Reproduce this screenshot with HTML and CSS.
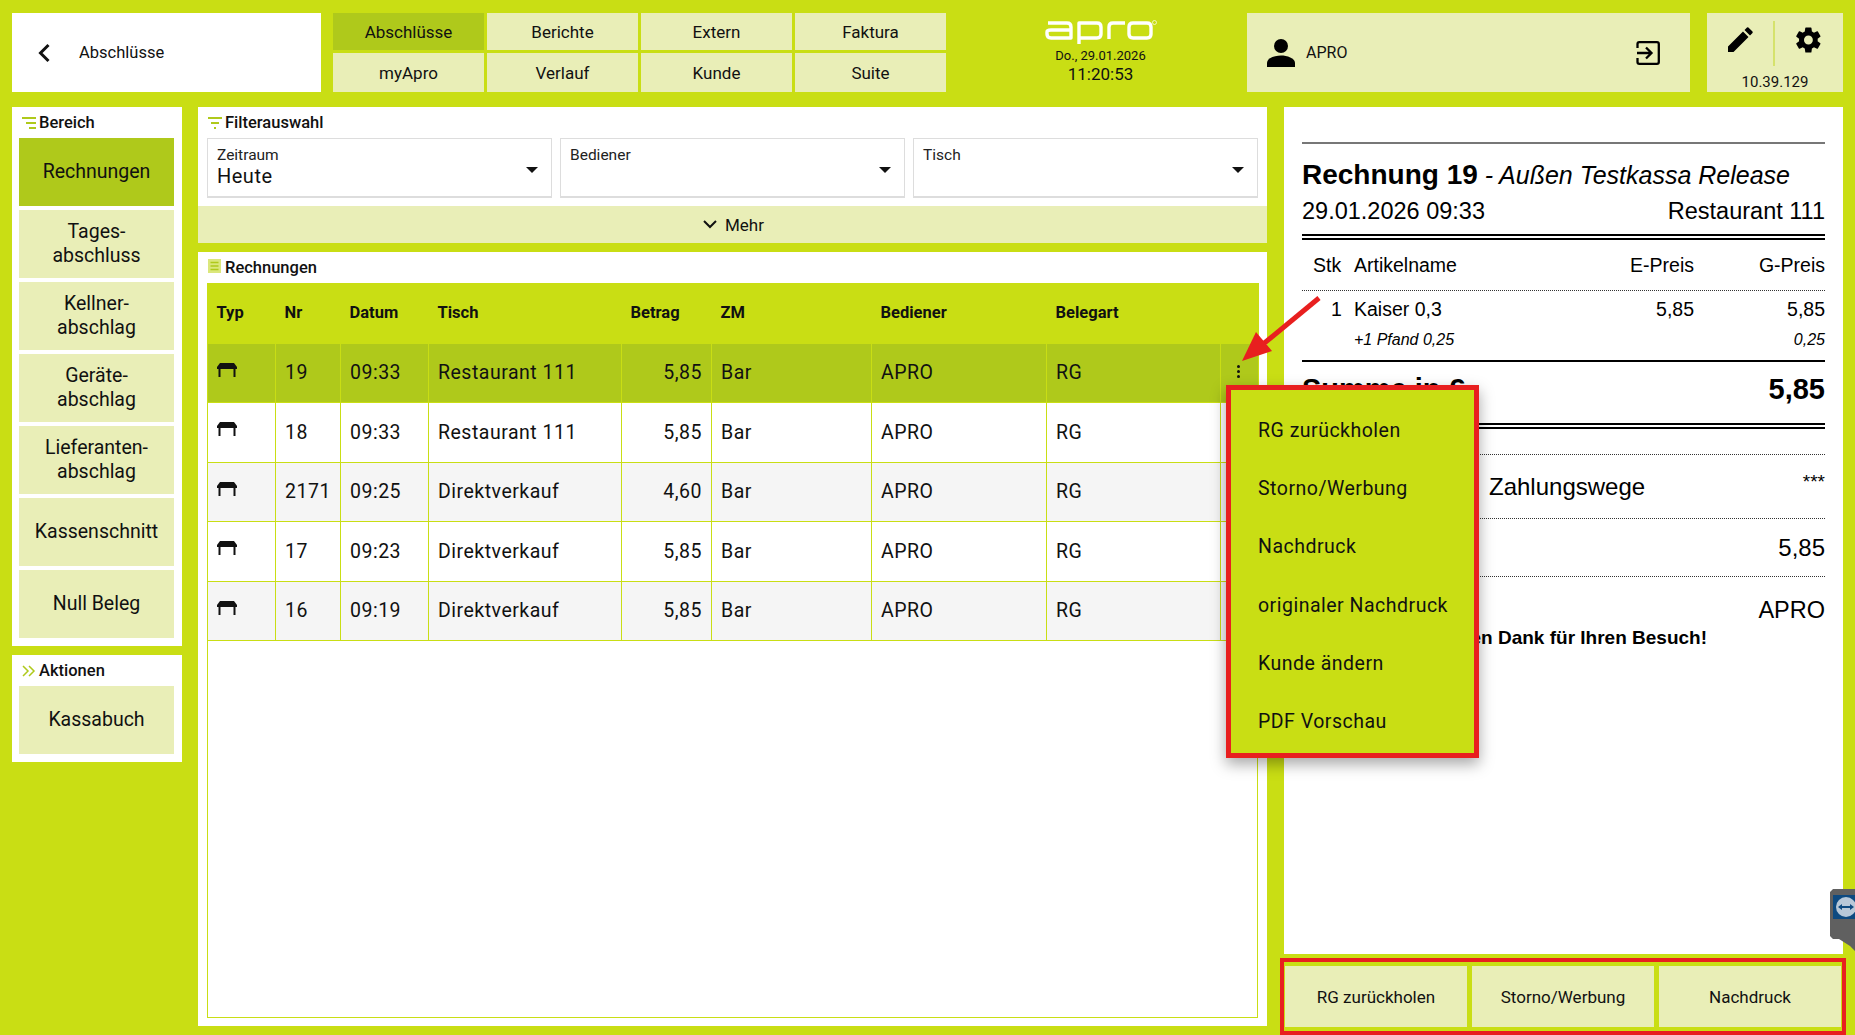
FILE: index.html
```html
<!DOCTYPE html>
<html lang="de">
<head>
    <meta charset="UTF-8">
    <meta name="viewport" content="width=device-width, initial-scale=1.0">
    <title>Abschlüsse</title>
    <link rel="stylesheet" href="styles.css">
</head>
<body>
<div id="page">
    <div id="topbar">
        <div id="back-panel">
            <svg class="back-icon" viewBox="0 0 14 20"><path d="M11.5 2 L3.5 10 L11.5 18" fill="none" stroke="#111" stroke-width="3"/></svg>
            <span>Abschlüsse</span>
        </div>
        <div id="tabs">
            <div class="tab active">Abschlüsse</div>
            <div class="tab">Berichte</div>
            <div class="tab">Extern</div>
            <div class="tab">Faktura</div>
            <div class="tab">myApro</div>
            <div class="tab">Verlauf</div>
            <div class="tab">Kunde</div>
            <div class="tab">Suite</div>
        </div>
        <div id="clock">
            <svg class="logo" viewBox="0 0 112 24" role="img" aria-label="apro">
                <g fill="none" stroke="#fff" stroke-width="3.4" stroke-linejoin="round">
                    <path d="M3 3 H22 Q26 3 26 7 V18 H6 Q2 18 2 14 V12 Q2 10 6 10 H26"/>
                    <path d="M34 24 V3 H52 Q56 3 56 7 V14 Q56 18 52 18 H34"/>
                    <path d="M64 19 V7 Q64 3 68 3 H80"/>
                    <path d="M88 3 H102 Q106 3 106 7 V14 Q106 18 102 18 H88 Q84 18 84 14 V7 Q84 3 88 3 Z"/>
                </g>
                <circle cx="109.500" cy="2.500" r="2" fill="none" stroke="#fff" stroke-width="0.7"/>
            </svg>
            <div class="clock-date">Do., 29.01.2026</div>
            <div class="clock-time">11:20:53</div>
        </div>
        <div id="user-panel">
            <svg class="user-icon" viewBox="0 0 28 28"><circle cx="14" cy="7" r="7" fill="#000"/><path d="M0 28 V24 C0 19 8 16.500 14 16.500 C20 16.500 28 19 28 24 V28 Z" fill="#000"/></svg>
            <span class="user-name">APRO</span>
            <svg class="exit-icon" viewBox="0 0 24 24"><path d="M1.500 7 V3 Q1.500 1.200 3.300 1.200 H21 Q22.800 1.200 22.800 3 V21 Q22.800 22.800 21 22.800 H3.300 Q1.500 22.800 1.500 21 V17 M1 12 H15 M10 6.500 L15.500 12 L10 17.500" fill="none" stroke="#000" stroke-width="2.300"/></svg>
        </div>
        <div id="tools-panel">
            <div class="tools-icons">
                <svg class="pencil-icon" viewBox="0 0 25 25"><path d="M0 25 V19.500 L15 4.500 L20.500 10 L5.500 25 Z M16.500 3 L19 0.500 Q19.700 0 20.400 0.500 L24.500 4.600 Q25 5.300 24.500 6 L22 8.500 Z" fill="#000"/></svg>
                <span class="tools-divider"></span>
                <svg class="gear-icon" viewBox="0 0 24 24"><path d="M19.400 13a7.500 7.500 0 0 0 0-2l2.300-1.700a.6.6 0 0 0 .1-.7l-2.200-3.800a.6.6 0 0 0-.7-.2l-2.700 1.100a8 8 0 0 0-1.700-1L14.100 1.800a.6.6 0 0 0-.5-.5H9.300a.6.6 0 0 0-.5.5l-.4 2.900a8 8 0 0 0-1.700 1L4 4.600a.6.6 0 0 0-.7.2L1.100 8.600a.6.6 0 0 0 .1.7L3.500 11a7.500 7.500 0 0 0 0 2l-2.300 1.700a.6.6 0 0 0-.1.7l2.200 3.800c.1.200.4.300.7.200l2.700-1.100a8 8 0 0 0 1.700 1l.4 2.900c0 .3.200.5.500.5h4.300c.3 0 .5-.2.500-.5l.4-2.900a8 8 0 0 0 1.700-1l2.700 1.100c.3.100.6 0 .7-.2l2.200-3.800a.6.6 0 0 0-.1-.7zM11.500 15.800a3.800 3.800 0 1 1 0-7.600 3.800 3.800 0 0 1 0 7.600z" fill="#000"/></svg>
            </div>
            <div class="tools-ip">10.39.129</div>
        </div>
    </div>

    <div id="main">
        <div id="sidebar">
            <div class="panel side-panel">
                <div class="panel-title">
                    <svg class="title-icon" viewBox="0 0 14 12"><path d="M0 1 H14 M4 6 H14 M7 11 H14" stroke="#afc91b" stroke-width="2" fill="none"/></svg>
                    Bereich
                </div>
                <div class="side-buttons">
                    <div class="side-btn active">Rechnungen</div>
                    <div class="side-btn">Tages-<br>abschluss</div>
                    <div class="side-btn">Kellner-<br>abschlag</div>
                    <div class="side-btn">Geräte-<br>abschlag</div>
                    <div class="side-btn">Lieferanten-<br>abschlag</div>
                    <div class="side-btn">Kassenschnitt</div>
                    <div class="side-btn">Null Beleg</div>
                </div>
            </div>
            <div class="panel side-panel">
                <div class="panel-title">
                    <svg class="title-icon" viewBox="0 0 14 12"><path d="M1 1 L6 6 L1 11 M7 1 L12 6 L7 11" stroke="#afc91b" stroke-width="1.500" fill="none"/></svg>
                    Aktionen
                </div>
                <div class="side-buttons">
                    <div class="side-btn">Kassabuch</div>
                </div>
            </div>
        </div>

        <div id="center">
            <div class="panel filter-panel">
                <div class="panel-title filter-title">
                    <svg class="title-icon" viewBox="0 0 14 12"><path d="M0 1 H14 M3 6 H11 M6 11 H8" stroke="#afc91b" stroke-width="2" fill="none"/></svg>
                    Filterauswahl
                </div>
                <div class="filter-row">
                    <div class="select">
                        <div class="select-label">Zeitraum</div>
                        <div class="select-value">Heute</div>
                        <span class="select-arrow"></span>
                    </div>
                    <div class="select">
                        <div class="select-label">Bediener</div>
                        <span class="select-arrow"></span>
                    </div>
                    <div class="select">
                        <div class="select-label">Tisch</div>
                        <span class="select-arrow"></span>
                    </div>
                </div>
                <div class="more-bar">
                    <svg class="more-icon" viewBox="0 0 14 9"><path d="M1 1 L7 7 L13 1" fill="none" stroke="#111" stroke-width="2"/></svg>
                    Mehr
                </div>
            </div>

            <div class="panel table-panel">
                <div class="panel-title filter-title">
                    <svg class="title-icon list-icon" viewBox="0 0 13 14"><rect width="13" height="14" fill="#dbe77c"/><path d="M2.500 3.500 H10.500 M2.500 7 H10.500 M2.500 10.500 H10.500" stroke="#afc91b" stroke-width="1.600"/></svg>
                    Rechnungen
                </div>
                <div class="table-wrap">
                    <table id="invoices">
                        <colgroup>
                            <col class="c-typ"><col class="c-nr"><col class="c-datum"><col class="c-tisch"><col class="c-betrag"><col class="c-zm"><col class="c-bed"><col class="c-beleg"><col class="c-menu">
                        </colgroup>
                        <thead>
                            <tr><th>Typ</th><th>Nr</th><th>Datum</th><th>Tisch</th><th>Betrag</th><th>ZM</th><th>Bediener</th><th>Belegart</th><th></th></tr>
                        </thead>
                        <tbody>
                            <tr class="selected">
                                <td><svg class="table-icon" viewBox="0 0 20 14"><path d="M3 0 H17 L20 4 V6 H18.500 V14 H16.500 V6 H3.500 V14 H1.500 V6 H0 V4 Z" fill="#111"/></svg></td>
                                <td>19</td><td>09:33</td><td>Restaurant 111</td><td class="num">5,85</td><td>Bar</td><td>APRO</td><td>RG</td>
                                <td class="menu-cell"><span class="dots"><i></i><i></i><i></i></span></td>
                            </tr>
                            <tr>
                                <td><svg class="table-icon" viewBox="0 0 20 14"><path d="M3 0 H17 L20 4 V6 H18.500 V14 H16.500 V6 H3.500 V14 H1.500 V6 H0 V4 Z" fill="#111"/></svg></td>
                                <td>18</td><td>09:33</td><td>Restaurant 111</td><td class="num">5,85</td><td>Bar</td><td>APRO</td><td>RG</td><td></td>
                            </tr>
                            <tr>
                                <td><svg class="table-icon" viewBox="0 0 20 14"><path d="M3 0 H17 L20 4 V6 H18.500 V14 H16.500 V6 H3.500 V14 H1.500 V6 H0 V4 Z" fill="#111"/></svg></td>
                                <td>2171</td><td>09:25</td><td>Direktverkauf</td><td class="num">4,60</td><td>Bar</td><td>APRO</td><td>RG</td><td></td>
                            </tr>
                            <tr>
                                <td><svg class="table-icon" viewBox="0 0 20 14"><path d="M3 0 H17 L20 4 V6 H18.500 V14 H16.500 V6 H3.500 V14 H1.500 V6 H0 V4 Z" fill="#111"/></svg></td>
                                <td>17</td><td>09:23</td><td>Direktverkauf</td><td class="num">5,85</td><td>Bar</td><td>APRO</td><td>RG</td><td></td>
                            </tr>
                            <tr>
                                <td><svg class="table-icon" viewBox="0 0 20 14"><path d="M3 0 H17 L20 4 V6 H18.500 V14 H16.500 V6 H3.500 V14 H1.500 V6 H0 V4 Z" fill="#111"/></svg></td>
                                <td>16</td><td>09:19</td><td>Direktverkauf</td><td class="num">5,85</td><td>Bar</td><td>APRO</td><td>RG</td><td></td>
                            </tr>
                        </tbody>
                    </table>
                </div>
            </div>
        </div>

        <div id="receipt-col">
            <div class="panel receipt">
                <div class="rule-gray"></div>
                <div class="r-title"><b>Rechnung 19</b> <i>- Außen Testkassa Release</i></div>
                <div class="r-row r-sub"><span>29.01.2026 09:33</span><span>Restaurant 111</span></div>
                <div class="rule-double gray-double"></div>
                <div class="r-head">
                    <span class="r-qty">Stk</span><span class="r-name">Artikelname</span><span class="r-price">E-Preis</span><span class="r-total">G-Preis</span>
                </div>
                <div class="rule-dot"></div>
                <div class="r-line">
                    <span class="r-qty r-qty-num">1</span><span class="r-name">Kaiser 0,3</span><span class="r-price">5,85</span><span class="r-total">5,85</span>
                </div>
                <div class="r-extra">
                    <span class="r-name">+1 Pfand 0,25</span><span class="r-total">0,25</span>
                </div>
                <div class="rule-solid"></div>
                <div class="r-row r-sum"><span>Summe in €</span><span>5,85</span></div>
                <div class="rule-double"></div>
                <div class="rule-dot r-gap"></div>
                <div class="r-row r-pay"><span class="r-pay-label">Zahlungswege</span><span class="r-stars">***</span></div>
                <div class="rule-dot"></div>
                <div class="r-row r-bar"><span>Bar</span><span>5,85</span></div>
                <div class="rule-dot"></div>
                <div class="r-row r-staff"><span>Bediener</span><span>APRO</span></div>
                <div class="r-thanks">Vielen Dank für Ihren Besuch!</div>
            </div>
            <div id="action-box">
                <div class="action-btn">RG zurückholen</div>
                <div class="action-btn">Storno/Werbung</div>
                <div class="action-btn">Nachdruck</div>
            </div>
        </div>
    </div>

    <!-- Kontextmenue + Markierung liegen ueber der Seite -->
    <div id="context-menu">
        <div class="menu-item">RG zurückholen</div>
        <div class="menu-item">Storno/Werbung</div>
        <div class="menu-item">Nachdruck</div>
        <div class="menu-item">originaler Nachdruck</div>
        <div class="menu-item">Kunde ändern</div>
        <div class="menu-item">PDF Vorschau</div>
    </div>
    <svg id="arrow" viewBox="0 0 90 70"><path d="M82 3 L25 50" stroke="#e81f1f" stroke-width="5" fill="none"/><path d="M5 66 L19 37 L35 56 Z" fill="#e81f1f"/></svg>
    <svg id="remote-tab" viewBox="0 0 25 62">
        <path d="M3 0 H25 V62 L20 57 L9 50 H3 L0 47 V3 Z" fill="#606060"/>
        <rect x="3" y="6" width="22" height="24" fill="#0e4a80"/>
        <circle cx="16" cy="18" r="10" fill="#b8c8d8"/>
        <path d="M8 18 L12 15 V17 H20 V15 L24 18 L20 21 V19 H12 V21 Z" fill="#0e4a80"/>
    </svg>
</div>
</body>
</html>
```

FILE: styles.css
```css
* {
    box-sizing: border-box;
}

body {
    margin: 0;
    font-family: 'Roboto', sans-serif;
    color: #111;
    background-color: #c9de14;
}

#page {
    position: relative;
    width: 1855px;
    height: 1035px;
    overflow: hidden;
    padding: 13px 12px 0 12px;
    background-color: #c9de14;
}

/* Kopfzeile */
#topbar {
    display: flex;
    height: 79px;
}

#back-panel {
    display: flex;
    align-items: center;
    width: 309px;
    margin-right: 12px;
    padding-left: 25px;
    background-color: #fff;
    font-size: 16.500px;
}

.back-icon {
    width: 14px;
    height: 20px;
    margin-right: 28px;
}

#tabs {
    display: grid;
    grid-template-columns: repeat(4, 151px);
    grid-template-rows: 37px 39px;
    gap: 3px;
    width: 613px;
}

.tab {
    display: flex;
    align-items: center;
    justify-content: center;
    background-color: #e9eeb7;
    font-size: 17px;
}

.tab.active {
    background-color: #afc91b;
}

#clock {
    width: 301px;
    padding: 7px 0 0 8px;
    text-align: center;
}

.logo {
    display: block;
    width: 112px;
    height: 24px;
    margin: 0 auto 3px auto;
}

.clock-date {
    font-size: 13px;
    line-height: 17px;
}

.clock-time {
    font-size: 17px;
    line-height: 21px;
}

#user-panel {
    display: flex;
    align-items: center;
    width: 443px;
    margin-right: 17px;
    padding: 0 30px 0 20px;
    background-color: #e9eeb7;
}

.user-icon {
    width: 28px;
    height: 28px;
    margin-right: 11px;
}

.user-name {
    flex: 1;
    font-size: 16px;
}

.exit-icon {
    width: 24px;
    height: 24px;
}

#tools-panel {
    width: 136px;
    background-color: #e9eeb7;
}

.tools-icons {
    display: flex;
    align-items: center;
    justify-content: space-between;
    height: 60px;
    padding: 7px 20px 7px 21px;
}

.pencil-icon {
    width: 25px;
    height: 25px;
    margin-top: -7px;
}

.tools-divider {
    width: 2px;
    height: 45px;
    background-color: #d5e26c;
}

.gear-icon {
    width: 28px;
    height: 28px;
    margin-top: -7px;
}

.tools-ip {
    font-size: 15px;
    text-align: center;
}

/* Hauptbereich */
#main {
    display: flex;
    margin-top: 15px;
}

.panel {
    background-color: #fff;
}

.panel-title {
    display: flex;
    align-items: center;
    height: 31px;
    font-size: 16.500px;
    font-weight: 500;
}

.title-icon {
    width: 14px;
    height: 12px;
    margin-right: 3px;
}

.list-icon {
    width: 13px;
    height: 14px;
    margin-top: -3px;
    margin-right: 4px;
}

#sidebar {
    width: 170px;
    margin-right: 16px;
}

.side-panel {
    padding: 0 8px 8px 7px;
    margin-bottom: 9px;
}

.side-panel .panel-title {
    padding-left: 3px;
}

.side-buttons {
    display: flex;
    flex-direction: column;
    gap: 4px;
}

.side-btn {
    display: flex;
    align-items: center;
    justify-content: center;
    height: 68px;
    background-color: #e9eeb7;
    font-size: 19.500px;
    line-height: 24px;
    text-align: center;
}

.side-btn.active {
    background-color: #afc91b;
}

#center {
    width: 1069px;
    margin-right: 17px;
}

.filter-title {
    padding-left: 10px;
}

.filter-row {
    display: flex;
    gap: 8px;
    padding: 0 9px;
}

.select {
    position: relative;
    flex: 1;
    height: 60px;
    padding: 7px 0 0 9px;
    border: 1px solid #ddd;
    border-bottom-width: 2px;
}

.select-label {
    font-size: 15.500px;
    line-height: 18px;
    color: #222;
}

.select-value {
    font-size: 20px;
    line-height: 24px;
    letter-spacing: 0.500px;
}

.select-arrow {
    position: absolute;
    top: 28px;
    right: 13px;
    border-left: 6px solid transparent;
    border-right: 6px solid transparent;
    border-top: 6px solid #111;
}

.more-bar {
    display: flex;
    align-items: center;
    justify-content: center;
    height: 37px;
    margin-top: 8px;
    padding-left: 2px;
    background-color: #e9eeb7;
    font-size: 17px;
}

.more-icon {
    width: 14px;
    height: 9px;
    margin-right: 8px;
}

.table-panel {
    height: 774px;
    margin-top: 9px;
    padding-bottom: 8px;
}

.table-wrap {
    height: 735px;
    margin: 0 9px;
    border: 1px solid #c9de14;
    border-top: none;
}

#invoices {
    width: 1051px;
    margin-left: -1px;
    border-collapse: collapse;
    table-layout: fixed;
}

.c-typ { width: 68px; }
.c-nr { width: 65px; }
.c-datum { width: 88px; }
.c-tisch { width: 193px; }
.c-betrag { width: 90px; }
.c-zm { width: 160px; }
.c-bed { width: 175px; }
.c-beleg { width: 174px; }
.c-menu { width: 38px; }

#invoices th {
    height: 60px;
    padding: 0 0 0 9px;
    background-color: #c9de14;
    font-size: 16.500px;
    font-weight: 700;
    text-align: left;
}

#invoices td {
    height: 59.500px;
    padding: 0 0 0 9px;
    border: 1px solid #c9de14;
    font-size: 19.500px;
    letter-spacing: 0.500px;
}

#invoices tbody tr:nth-child(odd) {
    background-color: #f5f5f5;
}

#invoices tbody tr.selected {
    background-color: #afc91b;
}

#invoices td.num {
    padding-right: 9px;
    text-align: right;
}

.table-icon {
    display: block;
    width: 20px;
    height: 14px;
    margin-top: -6px;
}

.dots {
    display: flex;
    flex-direction: column;
    align-items: center;
    gap: 2px;
    margin-left: 5px;
    width: 6px;
    margin-top: -3px;
}

.dots i {
    width: 3px;
    height: 3px;
    border-radius: 50%;
    background-color: #111;
}

/* Beleg */
#receipt-col {
    width: 559px;
}

.receipt {
    height: 847px;
    padding: 35px 18px 0 18px;
    font-family: 'Liberation Sans', Arial, sans-serif;
    color: #000;
}

.rule-gray {
    height: 2px;
    background-color: #777;
}

.r-title {
    margin-top: 10px;
    height: 42px;
    line-height: 42px;
    font-size: 25px;
    white-space: nowrap;
}

.r-title b {
    font-size: 28px;
}

.r-row {
    display: flex;
    justify-content: space-between;
}

.r-sub {
    height: 37px;
    font-size: 23.500px;
    line-height: 30px;
}

.rule-double {
    height: 6px;
    border-top: 2px solid #000;
    border-bottom: 2px solid #000;
}

.gray-double {
    margin-top: 1px;
}

.r-head,
.r-line,
.r-extra {
    display: flex;
    align-items: center;
}

.r-head {
    height: 50px;
    font-size: 19.500px;
}

.rule-dot {
    height: 1px;
    border-top: 1px dotted #333;
}

.r-line {
    height: 36px;
    font-size: 19.500px;
}

.r-qty {
    width: 52px;
    padding-left: 11px;
}

.r-qty-num {
    padding-left: 29px;
}

.r-name {
    flex: 1;
}

.r-price {
    width: 120px;
    text-align: right;
    padding-right: 0;
}

.r-total {
    width: 131px;
    text-align: right;
}

.r-extra {
    height: 25px;
    padding-left: 52px;
    font-size: 16px;
    font-style: italic;
}

.rule-solid {
    height: 2px;
    margin-top: 8px;
    background-color: #000;
}

.r-sum {
    height: 61px;
    font-size: 29px;
    font-weight: 700;
    line-height: 54px;
}

.r-gap {
    margin-top: 25px;
}

.r-pay {
    align-items: center;
    height: 63px;
    padding-left: 187px;
    font-size: 24px;
}

.r-stars {
    font-size: 19px;
    margin-top: -10px;
}

.r-bar {
    align-items: center;
    height: 57px;
    font-size: 24px;
}

.r-staff {
    align-items: center;
    height: 66px;
    font-size: 23.500px;
}

.r-thanks {
    padding-right: 118px;
    margin-top: -16px;
    font-size: 19px;
    font-weight: 700;
    text-align: right;
}

#action-box {
    display: flex;
    gap: 5px;
    width: 566px;
    height: 77px;
    margin: 4px 0 0 -4px;
    padding: 4px 1px 4px 1px;
    border: 4px solid #e81f1f;
    border-bottom-width: 4px;
}

.action-btn {
    display: flex;
    flex: 1;
    align-items: center;
    justify-content: center;
    background-color: #e9eeb7;
    font-size: 17px;
}

/* Overlays */
#context-menu {
    position: absolute;
    top: 385px;
    left: 1226px;
    width: 253px;
    height: 373px;
    padding: 11px 0 0 27px;
    background-color: #c9de14;
    border: 5px solid #e81f1f;
    box-shadow: 0 6px 14px rgba(0, 0, 0, 0.35);
}

.menu-item {
    display: flex;
    align-items: center;
    height: 58.300px;
    font-size: 19.500px;
    letter-spacing: 0.500px;
}

#arrow {
    position: absolute;
    top: 295px;
    left: 1237px;
    width: 90px;
    height: 70px;
}

#remote-tab {
    position: absolute;
    top: 889px;
    left: 1830px;
    width: 25px;
    height: 62px;
}
```
